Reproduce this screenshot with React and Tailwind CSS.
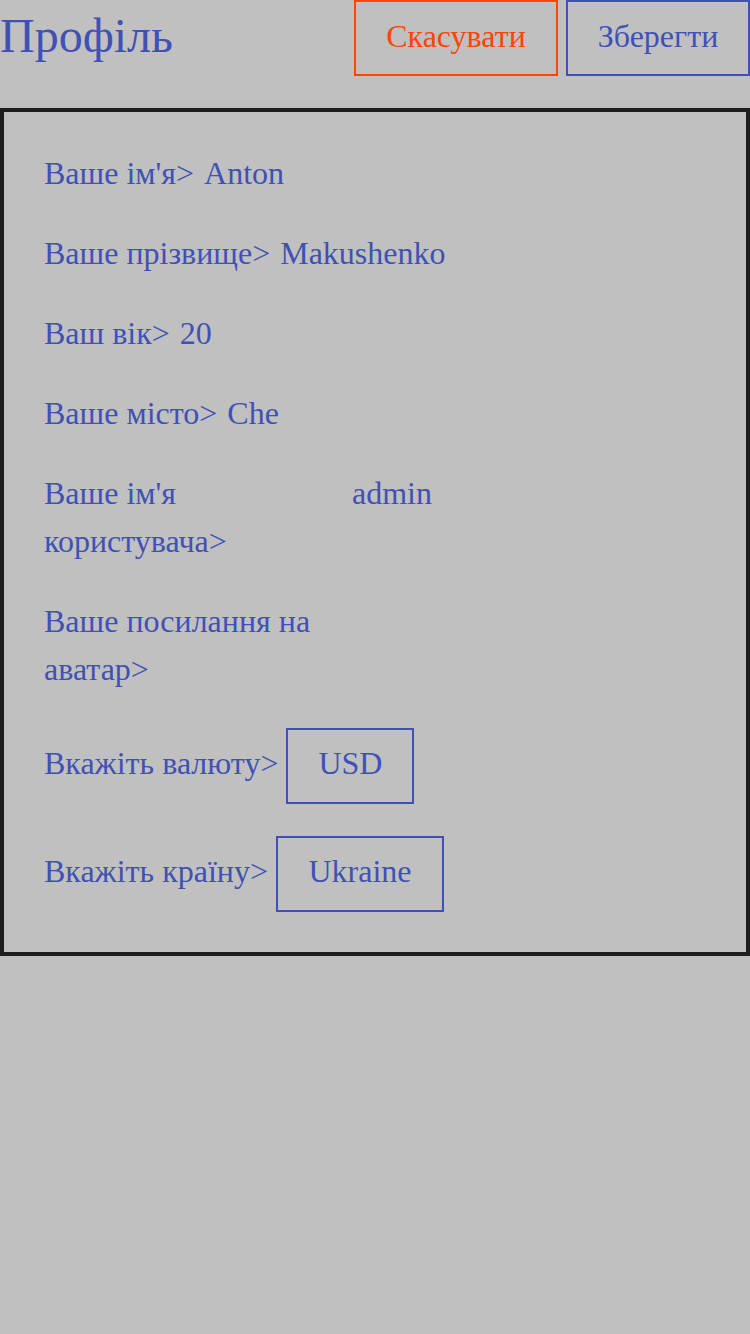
export default function App() {
  const font = { fontFamily: '"Liberation Serif", "Times New Roman", serif' };
  return (
    <div className="min-h-[1334px] w-[750px] bg-[#c0c0c0] text-[#3f51b5]" style={font}>
      <div className="flex items-start justify-between">
        <div className="text-[48px] leading-[72px] mt-0">Профіль</div>
        <div className="flex gap-2">
          <div className="w-[204px] h-[76px] pb-[4px] border-2 border-[#ff4500] text-[#ff4500] text-[32px] flex items-center justify-center">Скасувати</div>
          <div className="w-[184px] h-[76px] pb-[4px] border-2 border-[#3f51b5] text-[32px] flex items-center justify-center">Зберегти</div>
        </div>
      </div>
      <div className="mt-[32px] border-4 border-[#1e1e1e] px-10 pt-[37px] pb-[40px] text-[32px] leading-[48px]">
        <div className="flex flex-col gap-8">
          <div className="flex gap-[10px]"><span>Ваше ім'я&gt;</span><span>Anton</span></div>
          <div className="flex gap-[10px]"><span>Ваше прізвище&gt;</span><span>Makushenko</span></div>
          <div className="flex gap-[10px]"><span>Ваш вік&gt;</span><span>20</span></div>
          <div className="flex gap-[10px]"><span>Ваше місто&gt;</span><span>Che</span></div>
          <div className="flex">
            <div className="w-[308px]">Ваше ім'я<br />користувача&gt;</div>
            <div>admin</div>
          </div>
          <div>Ваше посилання на<br />аватар&gt;</div>
        </div>
        <div className="mt-[35px] flex flex-col gap-8">
          <div className="flex items-baseline gap-2">
            <span>Вкажіть валюту&gt;</span>
            <div className="w-[128px] h-[76px] pb-[6px] border-2 border-[#3f51b5] flex items-center justify-center">USD</div>
          </div>
          <div className="flex items-baseline gap-2">
            <span>Вкажіть країну&gt;</span>
            <div className="w-[168px] h-[76px] pb-[6px] border-2 border-[#3f51b5] flex items-center justify-center">Ukraine</div>
          </div>
        </div>
      </div>
    </div>
  );
}
